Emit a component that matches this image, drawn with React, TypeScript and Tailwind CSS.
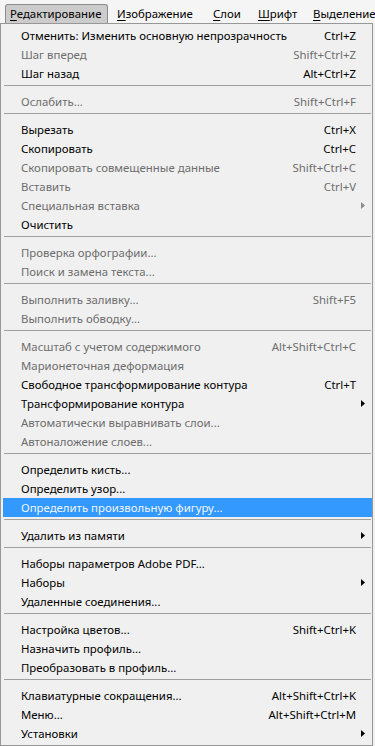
import React from "react";

type Item = {
  label: string;
  shortcut?: string;
  disabled?: boolean;
  submenu?: boolean;
  active?: boolean;
};

// sections are separated by a divider line
const SECTIONS: Item[][] = [
  [
    { label: "Отменить: Изменить основную непрозрачность", shortcut: "Ctrl+Z" },
    { label: "Шаг вперед", shortcut: "Shift+Ctrl+Z", disabled: true },
    { label: "Шаг назад", shortcut: "Alt+Ctrl+Z" },
  ],
  [{ label: "Ослабить...", shortcut: "Shift+Ctrl+F", disabled: true }],
  [
    { label: "Вырезать", shortcut: "Ctrl+X" },
    { label: "Скопировать", shortcut: "Ctrl+C" },
    { label: "Скопировать совмещенные данные", shortcut: "Shift+Ctrl+C", disabled: true },
    { label: "Вставить", shortcut: "Ctrl+V", disabled: true },
    { label: "Специальная вставка", disabled: true, submenu: true },
    { label: "Очистить" },
  ],
  [
    { label: "Проверка орфографии...", disabled: true },
    { label: "Поиск и замена текста...", disabled: true },
  ],
  [
    { label: "Выполнить заливку...", shortcut: "Shift+F5", disabled: true },
    { label: "Выполнить обводку...", disabled: true },
  ],
  [
    { label: "Масштаб с учетом содержимого", shortcut: "Alt+Shift+Ctrl+C", disabled: true },
    { label: "Марионеточная деформация", disabled: true },
    { label: "Свободное трансформирование контура", shortcut: "Ctrl+T" },
    { label: "Трансформирование контура", submenu: true },
    { label: "Автоматически выравнивать слои...", disabled: true },
    { label: "Автоналожение слоев...", disabled: true },
  ],
  [
    { label: "Определить кисть..." },
    { label: "Определить узор..." },
    { label: "Определить произвольную фигуру...", active: true },
  ],
  [{ label: "Удалить из памяти", submenu: true }],
  [
    { label: "Наборы параметров Adobe PDF..." },
    { label: "Наборы", submenu: true },
    { label: "Удаленные соединения..." },
  ],
  [
    { label: "Настройка цветов...", shortcut: "Shift+Ctrl+K" },
    { label: "Назначить профиль..." },
    { label: "Преобразовать в профиль..." },
  ],
  [
    { label: "Клавиатурные сокращения...", shortcut: "Alt+Shift+Ctrl+K" },
    { label: "Меню...", shortcut: "Alt+Shift+Ctrl+M" },
    { label: "Установки", submenu: true },
  ],
];

const MENUBAR = [
  { first: "Р", rest: "едактирование", w: "w-[103px]", open: true },
  { first: "И", rest: "зображение", w: "w-[91px]" },
  { first: "С", rest: "лои", w: "w-[40px]" },
  { first: "Ш", rest: "рифт", w: "w-[50px]" },
  { first: "В", rest: "ыделение", w: "w-[64px]" },
];

function Arrow({ color }: { color: string }) {
  return (
    <svg width="4" height="7" viewBox="0 0 4 7" className="ml-[5px]">
      <path d="M0 0 L4 3.5 L0 7 Z" fill={color} />
    </svg>
  );
}

function Row({ item }: { item: Item }) {
  const color = item.active ? "text-[#eef4ff]" : item.disabled ? "text-[#6d6d6d]" : "text-black";
  return (
    <div
      className={`flex h-[19px] items-center pl-[18px] ${color} ${item.active ? "bg-[#3399ff]" : ""}`}
    >
      <span className="flex-1 whitespace-nowrap">{item.label}</span>
      {item.shortcut && <span className="whitespace-nowrap">{item.shortcut}</span>}
      <div className="flex w-[16px] items-center">
        {item.submenu && <Arrow color={item.disabled ? "#8a8a8a" : "#000"} />}
      </div>
    </div>
  );
}

export default function App() {
  return (
    <div className="h-[746px] w-[375px] overflow-hidden bg-[#f0f0f0] font-['Noto_Sans',sans-serif] text-[11.4px] leading-none">
      {/* Menu bar */}
      <div className="flex h-[23px] items-end gap-[5px] bg-[#f5f5f5] pl-[5px]">
        {MENUBAR.map((m) => (
          <div
            key={m.rest}
            className={`flex h-[19px] shrink-0 items-center pl-[4px] text-black ${m.w} ${
              m.open ? "rounded-t-[3px] border border-b-0 border-[#8c8c8c] bg-[#cccccc] pl-[3px]" : ""
            }`}
          >
            <span className="whitespace-nowrap">
              <span className="underline underline-offset-[2px]">{m.first}</span>
              {m.rest}
            </span>
          </div>
        ))}
      </div>

      {/* Dropdown */}
      <div className="w-[373px] border border-[#979797] bg-[#f0f0f0] pb-[2px] pl-[2px] pt-[2px]">
        {SECTIONS.map((section, i) => (
          <div key={i}>
            {i > 0 && (
              <div className="mb-[6px] ml-[1px] mr-[1px] mt-[2px] h-px bg-[#a0a0a0]" />
            )}
            {section.map((item) => (
              <Row key={item.label} item={item} />
            ))}
          </div>
        ))}
      </div>
    </div>
  );
}
